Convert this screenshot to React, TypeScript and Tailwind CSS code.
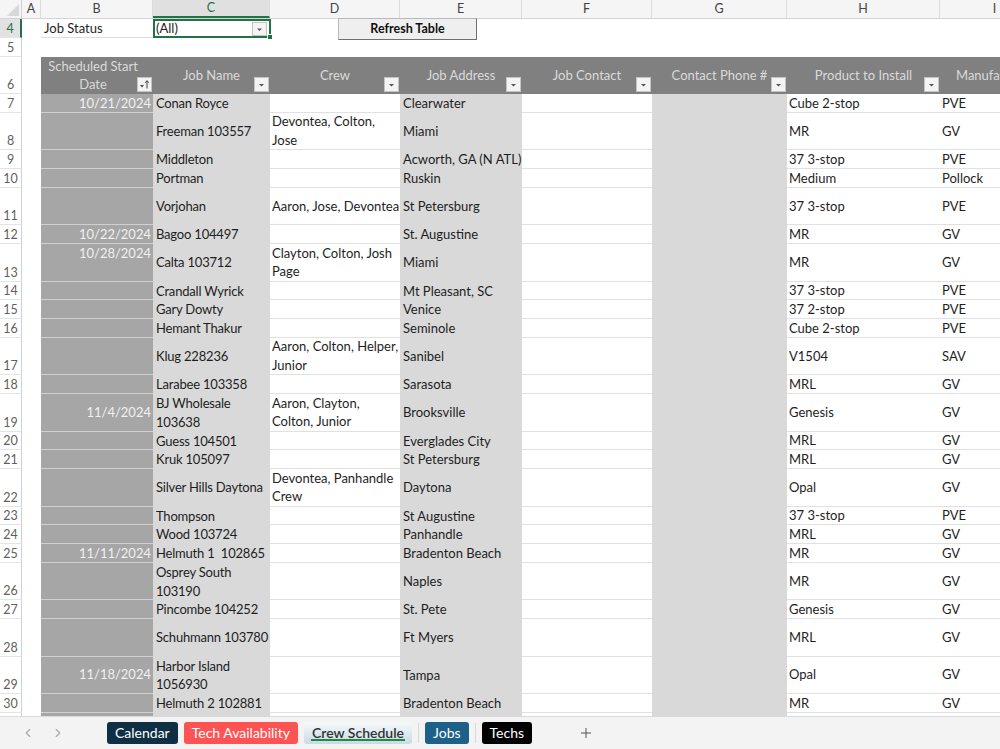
import React from 'react';
import { ChevronLeft, ChevronRight, Plus } from 'lucide-react';

type Row = {
  n: number;
  tall?: boolean;
  date?: string;
  dateTop?: boolean;
  name: string;
  crew?: string;
  addr: string;
  product: string;
  mfr: string;
};

const rows: Row[] = [
  { n: 7, date: '10/21/2024', name: 'Conan Royce', addr: 'Clearwater', product: 'Cube 2-stop', mfr: 'PVE' },
  { n: 8, tall: true, name: 'Freeman 103557', crew: 'Devontea, Colton,\nJose', addr: 'Miami', product: 'MR', mfr: 'GV' },
  { n: 9, name: 'Middleton', addr: 'Acworth, GA (N ATL)', product: '37 3-stop', mfr: 'PVE' },
  { n: 10, name: 'Portman', addr: 'Ruskin', product: 'Medium', mfr: 'Pollock' },
  { n: 11, tall: true, name: 'Vorjohan', crew: 'Aaron, Jose, Devontea', addr: 'St Petersburg', product: '37 3-stop', mfr: 'PVE' },
  { n: 12, date: '10/22/2024', name: 'Bagoo 104497', addr: 'St. Augustine', product: 'MR', mfr: 'GV' },
  { n: 13, tall: true, date: '10/28/2024', dateTop: true, name: 'Calta 103712', crew: 'Clayton, Colton, Josh\nPage', addr: 'Miami', product: 'MR', mfr: 'GV' },
  { n: 14, name: 'Crandall Wyrick', addr: 'Mt Pleasant, SC', product: '37 3-stop', mfr: 'PVE' },
  { n: 15, name: 'Gary Dowty', addr: 'Venice', product: '37 2-stop', mfr: 'PVE' },
  { n: 16, name: 'Hemant Thakur', addr: 'Seminole', product: 'Cube 2-stop', mfr: 'PVE' },
  { n: 17, tall: true, name: 'Klug 228236', crew: 'Aaron, Colton, Helper,\nJunior', addr: 'Sanibel', product: 'V1504', mfr: 'SAV' },
  { n: 18, name: 'Larabee 103358', addr: 'Sarasota', product: 'MRL', mfr: 'GV' },
  { n: 19, tall: true, date: '11/4/2024', name: 'BJ Wholesale\n103638', crew: 'Aaron, Clayton,\nColton, Junior', addr: 'Brooksville', product: 'Genesis', mfr: 'GV' },
  { n: 20, name: 'Guess 104501', addr: 'Everglades City', product: 'MRL', mfr: 'GV' },
  { n: 21, name: 'Kruk 105097', addr: 'St Petersburg', product: 'MRL', mfr: 'GV' },
  { n: 22, tall: true, name: 'Silver Hills Daytona', crew: 'Devontea, Panhandle\nCrew', addr: 'Daytona', product: 'Opal', mfr: 'GV' },
  { n: 23, name: 'Thompson', addr: 'St Augustine', product: '37 3-stop', mfr: 'PVE' },
  { n: 24, name: 'Wood 103724', addr: 'Panhandle', product: 'MRL', mfr: 'GV' },
  { n: 25, date: '11/11/2024', name: 'Helmuth 1  102865', addr: 'Bradenton Beach', product: 'MR', mfr: 'GV' },
  { n: 26, tall: true, name: 'Osprey South\n103190', addr: 'Naples', product: 'MR', mfr: 'GV' },
  { n: 27, name: 'Pincombe 104252', addr: 'St. Pete', product: 'Genesis', mfr: 'GV' },
  { n: 28, tall: true, name: 'Schuhmann 103780', addr: 'Ft Myers', product: 'MRL', mfr: 'GV' },
  { n: 29, tall: true, date: '11/18/2024', name: 'Harbor Island\n1056930', addr: 'Tampa', product: 'Opal', mfr: 'GV' },
  { n: 30, name: 'Helmuth 2 102881', addr: 'Bradenton Beach', product: 'MR', mfr: 'GV' },
  { n: 31, name: 'John Doyle 104051', addr: 'Sanibel', product: 'Genesis', mfr: 'GV' },
];

// filter dropdown button in table header
const FilterBtn = ({ sorted }: { sorted?: boolean }) => (
  <div className="absolute right-[1px] bottom-[2px] w-[15px] h-[15px] bg-[#f4f4f4] border border-[#c4c4c4] flex items-center justify-center">
    {sorted ? (
      <svg width="11" height="11" viewBox="0 0 11 11">
        <path d="M1 6 L5 6 L3 8.5 Z" fill="#444" />
        <path d="M8 9.5 L8 2" stroke="#444" strokeWidth="1" />
        <path d="M6.2 3.8 L8 1.6 L9.8 3.8" stroke="#444" strokeWidth="1" fill="none" />
      </svg>
    ) : (
      <svg width="9" height="9" viewBox="0 0 9 9">
        <path d="M2 4 L7 4 L4.5 6.5 Z" fill="#555" />
      </svg>
    )}
  </div>
);

const RowNum = ({ n, active }: { n: number | string; active?: boolean }) => (
  <div
    className={`w-[22px] shrink-0 flex items-end justify-center pb-[1px] text-[12.5px] leading-[14px] border-b border-[#e4e4e4] ${
      active ? 'bg-[#e2e2e2] text-[#217346] border-r-2 border-r-[#217346]' : 'bg-white text-[#5f5f5f] border-r border-r-[#d0d0d0]'
    }`}
  >
    {n}
  </div>
);

function DataRow({ r }: { r: Row }) {
  const h = r.tall ? 'h-[37.5px]' : 'h-[18.75px]';
  return (
    <div className={`flex ${h}`}>
      <RowNum n={r.n} />
      <div className="w-[19px] shrink-0" />
      <div
        className={`w-[112px] shrink-0 bg-[#a6a6a6] border-b border-[#d0d0d0] text-[#f0f0f0] flex justify-end pr-[2px] ${
          r.dateTop ? 'items-start' : 'items-center'
        }`}
      >
        {r.date}
      </div>
      <div className="w-[117px] shrink-0 bg-[#d9d9d9] pl-[3px] flex items-center whitespace-pre overflow-hidden tracking-[-0.2px]">{r.name}</div>
      <div className="w-[130px] shrink-0 bg-white border-b border-[#e1e1e1] pl-[2px] flex items-center whitespace-pre overflow-hidden">{r.crew}</div>
      <div className="w-[122px] shrink-0 bg-[#d9d9d9] pl-[3px] flex items-center whitespace-pre overflow-hidden">{r.addr}</div>
      <div className="w-[130px] shrink-0 bg-white border-b border-[#e1e1e1]" />
      <div className="w-[135px] shrink-0 bg-[#d9d9d9]" />
      <div className="w-[153px] shrink-0 bg-white border-b border-[#e1e1e1] pl-[2px] flex items-center whitespace-pre overflow-hidden">{r.product}</div>
      <div className="w-[110px] shrink-0 bg-white border-b border-[#e1e1e1] pl-[2px] flex items-center whitespace-pre overflow-hidden">{r.mfr}</div>
    </div>
  );
}

const colLetters: [string, string][] = [
  ['A', 'w-[19px]'],
  ['B', 'w-[112px]'],
  ['C', 'w-[117px]'],
  ['D', 'w-[130px]'],
  ['E', 'w-[122px]'],
  ['F', 'w-[130px]'],
  ['G', 'w-[135px]'],
  ['H', 'w-[153px]'],
  ['I', 'w-[110px]'],
];

const Tab = ({ label, cls }: { label: string; cls: string }) => (
  <div className={`h-[22px] px-[8px] rounded-[3px] flex items-center text-[14px] ${cls}`}>{label}</div>
);

export default function App() {
  return (
    <div className="w-[1000px] h-[749px] overflow-hidden flex flex-col bg-white text-[13px] leading-[18.75px] text-[#1e1e1e] font-['Lato',sans-serif]">
      <div className="h-[716px] overflow-hidden">
        {/* column letters */}
        <div className="flex h-[19px] bg-[#f5f5f5] border-b border-[#d4d4d4] text-[12.5px] text-[#444]">
          <div className="w-[22px] shrink-0 border-r border-[#d0d0d0] flex items-end justify-end p-[2px]">
            <svg width="12" height="12" viewBox="0 0 12 12">
              <path d="M12 0 L12 12 L0 12 Z" fill="#d8d8d8" />
            </svg>
          </div>
          {colLetters.map(([l, w]) => (
            <div
              key={l}
              className={`${w} shrink-0 flex items-center justify-center border-r border-[#dcdcdc] ${
                l === 'C' ? 'bg-[#e0e0e0] text-[#217346] border-b-2 border-b-[#217346]' : ''
              }`}
            >
              {l}
            </div>
          ))}
        </div>

        {/* row 4: filter + button */}
        <div className="relative flex h-[18.75px]">
          <RowNum n={4} active />
          <div className="w-[19px] shrink-0" />
          <div className="w-[112px] shrink-0 pl-[3px] border-b border-[#dedede] flex items-center">Job Status</div>
          <div className="relative w-[118px] shrink-0 border-2 border-[#217346] pl-[1px] flex items-center">
            (All)
            <div className="absolute right-[2px] top-[1px] w-[15px] h-[14px] bg-[#f4f4f4] border border-[#c4c4c4] flex items-center justify-center">
              <svg width="9" height="9" viewBox="0 0 9 9">
                <path d="M2 3.5 L7 3.5 L4.5 6 Z" fill="#555" />
              </svg>
            </div>
            <div className="absolute right-[-4px] bottom-[-4px] w-[6px] h-[6px] bg-[#217346] border border-white" />
          </div>
          <div className="absolute left-[338px] top-[-1px] w-[139px] h-[22px] bg-[#efefef] border border-[#b8b8b8] border-r-[#6f6f6f] border-b-[#6f6f6f] flex items-center justify-center text-[12.5px] font-bold text-[#111]">
            Refresh Table
          </div>
        </div>

        {/* row 5 */}
        <div className="flex h-[18.75px]">
          <RowNum n={5} />
        </div>

        {/* row 6: table header */}
        <div className="flex h-[37.5px]">
          <RowNum n={6} />
          <div className="w-[19px] shrink-0" />
          <div className="flex bg-[#808080] text-[#dadada]">
            <div className="relative w-[112px] shrink-0 flex items-center justify-center text-center leading-[18.75px] pr-[8px]">
              Scheduled Start
              <br />
              Date
              <FilterBtn sorted />
            </div>
            <div className="relative w-[117px] shrink-0 flex items-center justify-center">Job Name<FilterBtn /></div>
            <div className="relative w-[130px] shrink-0 flex items-center justify-center">Crew<FilterBtn /></div>
            <div className="relative w-[122px] shrink-0 flex items-center justify-center">Job Address<FilterBtn /></div>
            <div className="relative w-[130px] shrink-0 flex items-center justify-center">Job Contact<FilterBtn /></div>
            <div className="relative w-[135px] shrink-0 flex items-center justify-center">Contact Phone #<FilterBtn /></div>
            <div className="relative w-[153px] shrink-0 flex items-center justify-center">Product to Install<FilterBtn /></div>
            <div className="relative w-[110px] shrink-0 flex items-center justify-center whitespace-nowrap">Manufacturer<FilterBtn /></div>
          </div>
        </div>

        {rows.map((r) => (
          <DataRow key={r.n} r={r} />
        ))}
      </div>

      {/* sheet tabs */}
      <div className="h-[33px] bg-[#f3f3f3] border-t border-[#dadada] flex items-center">
        <div className="w-[107px] shrink-0 flex items-center pl-[21px] gap-[16px] text-[#a8a8a8]">
          <ChevronLeft size={14} />
          <ChevronRight size={14} />
        </div>
        <div className="flex items-center gap-[6px]">
          <Tab label="Calendar" cls="bg-[#0e2f44] text-white" />
          <Tab label="Tech Availability" cls="bg-[#fd5353] text-white" />
          <div className="h-[22px] px-[8px] rounded-[3px] flex items-center text-[14px] font-semibold text-[#333] bg-gradient-to-b from-[#f6f9fb] to-[#c8dbe4] relative">
            Crew Schedule
            <div className="absolute left-[7px] right-[7px] bottom-[3px] h-[2px] bg-[#1e8c45]" />
          </div>
          <div className="w-[1px] h-[20px] bg-[#d8d8d8]" />
          <Tab label="Jobs" cls="bg-[#1d6188] text-white" />
          <div className="w-[1px] h-[20px] bg-[#d8d8d8]" />
          <Tab label="Techs" cls="bg-black text-white" />
        </div>
        <div className="ml-[46px] text-[#555]">
          <Plus size={16} strokeWidth={1.5} />
        </div>
      </div>
    </div>
  );
}
